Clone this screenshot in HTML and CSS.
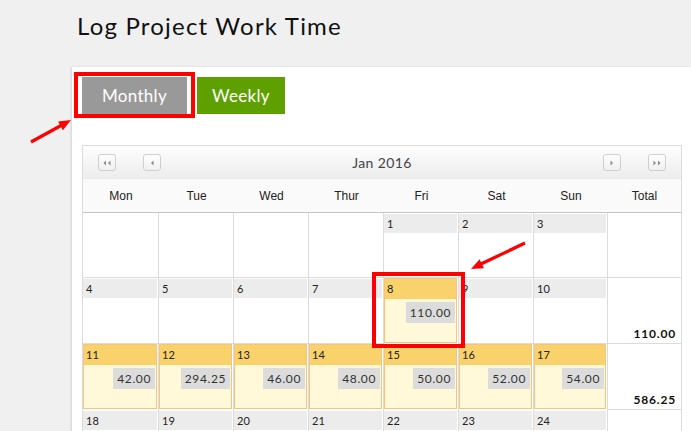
FILE: index.html
```html
<!DOCTYPE html>
<html>
<head>
<meta charset="utf-8">
<title>Log Project Work Time</title>
<link rel="stylesheet" href="styles.css">
</head>
<body>
<h1 class="title">Log Project Work Time</h1>
<div class="panel">
  <div class="tabs">
    <button class="tab tab-monthly">Monthly</button>
    <button class="tab tab-weekly">Weekly</button>
  </div>
  <div class="calendar">
    <div class="cal-head">
      <div class="nav-group">
        <span class="nav-btn"><svg width="8" height="6" viewBox="0 0 8 6"><path d="M3 0.5V5.5L0.5 3Z M7.5 0.5V5.5L5 3Z" fill="#8a8a8a"/></svg></span>
        <span class="nav-btn"><svg width="4" height="6" viewBox="0 0 4 6"><path d="M3.5 0.5V5.5L1 3Z" fill="#8a8a8a"/></svg></span>
      </div>
      <div class="month">Jan 2016</div>
      <div class="nav-group">
        <span class="nav-btn"><svg width="4" height="6" viewBox="0 0 4 6"><path d="M0.5 0.5V5.5L3 3Z" fill="#8a8a8a"/></svg></span>
        <span class="nav-btn"><svg width="8" height="6" viewBox="0 0 8 6"><path d="M0.5 0.5V5.5L3 3Z M5 0.5V5.5L7.5 3Z" fill="#8a8a8a"/></svg></span>
      </div>
    </div>
    <div class="grid">
      <div class="dow">Mon</div>
      <div class="dow">Tue</div>
      <div class="dow">Wed</div>
      <div class="dow">Thur</div>
      <div class="dow">Fri</div>
      <div class="dow">Sat</div>
      <div class="dow">Sun</div>
      <div class="dow">Total</div>

      <div class="cell"></div>
      <div class="cell"></div>
      <div class="cell"></div>
      <div class="cell"></div>
      <div class="cell"><div class="day">1</div></div>
      <div class="cell"><div class="day">2</div></div>
      <div class="cell"><div class="day">3</div></div>
      <div class="cell total"></div>

      <div class="cell"><div class="day">4</div></div>
      <div class="cell"><div class="day">5</div></div>
      <div class="cell"><div class="day">6</div></div>
      <div class="cell"><div class="day">7</div></div>
      <div class="cell event"><div class="box"><div class="day">8</div><div class="val-row"><span class="val">110.00</span></div></div></div>
      <div class="cell"><div class="day">9</div></div>
      <div class="cell"><div class="day">10</div></div>
      <div class="cell total"><span class="sum">110.00</span></div>

      <div class="cell event"><div class="box"><div class="day">11</div><div class="val-row"><span class="val">42.00</span></div></div></div>
      <div class="cell event"><div class="box"><div class="day">12</div><div class="val-row"><span class="val">294.25</span></div></div></div>
      <div class="cell event"><div class="box"><div class="day">13</div><div class="val-row"><span class="val">46.00</span></div></div></div>
      <div class="cell event"><div class="box"><div class="day">14</div><div class="val-row"><span class="val">48.00</span></div></div></div>
      <div class="cell event"><div class="box"><div class="day">15</div><div class="val-row"><span class="val">50.00</span></div></div></div>
      <div class="cell event"><div class="box"><div class="day">16</div><div class="val-row"><span class="val">52.00</span></div></div></div>
      <div class="cell event"><div class="box"><div class="day">17</div><div class="val-row"><span class="val">54.00</span></div></div></div>
      <div class="cell total"><span class="sum">586.25</span></div>

      <div class="cell"><div class="day">18</div></div>
      <div class="cell"><div class="day">19</div></div>
      <div class="cell"><div class="day">20</div></div>
      <div class="cell"><div class="day">21</div></div>
      <div class="cell"><div class="day">22</div></div>
      <div class="cell"><div class="day">23</div></div>
      <div class="cell"><div class="day">24</div></div>
      <div class="cell total"></div>
    </div>
  </div>
</div>

<div class="mark mark-tab"></div>
<div class="mark mark-day"></div>
<svg class="arrows" width="691" height="431" viewBox="0 0 691 431">
  <line x1="31" y1="142" x2="62" y2="125" stroke="#f00" stroke-width="3.2"/>
  <polygon points="71,120 58.1,121.4 62.9,130.2" fill="#f00"/>
  <line x1="525" y1="243" x2="481" y2="264" stroke="#f00" stroke-width="3.2"/>
  <polygon points="471,269 479.6,259.3 484,268.3" fill="#f00"/>
</svg>
</body>
</html>
```
FILE: styles.css
```css
html, body {
  margin: 0;
  padding: 0;
  overflow: hidden;
  height: 100%;
}
body {
  background: #f0f0f0;
  font-family: Lato, "Open Sans", sans-serif;
  color: #222;
  position: relative;
}
.title {
  margin: 11px 0 0 77px;
  font-weight: 400;
  font-size: 24px;
  line-height: 29px;
  letter-spacing: 1.2px;
  color: #111;
}
.panel {
  margin: 27px 0 0 72px;
  background: #fff;
  box-shadow: -1px 0 2px rgba(0,0,0,0.12);
  padding: 10px 10px 40px 10px;
  min-height: 400px;
}
.tabs {
  display: flex;
  gap: 10px;
}
.tab {
  border: 0;
  height: 37px;
  font-family: Lato, sans-serif;
  font-size: 17px;
  letter-spacing: 0.3px;
  color: #fff;
  padding: 0;
}
.tab-monthly { width: 105px; background: #999; }
.tab-weekly { width: 88px; background: #5da000; }

.calendar {
  margin-top: 31px;
  width: 600px;
  border: 1px solid #dcdcdc;
  box-sizing: border-box;
}
.cal-head {
  height: 33px;
  background: linear-gradient(#fefefe, #ececec);
  display: flex;
  align-items: center;
  justify-content: space-between;
  padding: 0 15px;
}
.nav-group {
  display: flex;
  gap: 27px;
}
.nav-btn {
  width: 18px;
  height: 17px;
  box-sizing: border-box;
  border: 1px solid #cfcfcf;
  border-radius: 3px;
  background: linear-gradient(#fff, #f0f0f0);
  display: flex;
  align-items: center;
  justify-content: center;
}
.month {
  font-size: 14px;
  color: #444;
  letter-spacing: 0.4px;
}
.grid {
  display: grid;
  grid-template-columns: 76px 75px 75px 75px 75px 75px 74px 1fr;
  grid-template-rows: 34px 65px 66px 66px 66px;
}
.dow {
  box-sizing: border-box;
  background: #fafafa;
  border-bottom: 1px solid #c4c4c4;
  font-family: "Liberation Sans", Arial, sans-serif;
  font-size: 12px;
  color: #222;
  display: flex;
  align-items: center;
  justify-content: center;
}
.cell {
  box-sizing: border-box;
  border-right: 1px solid #dcdcdc;
  border-bottom: 1px solid #dcdcdc;
  padding: 1px 1px 0 0;
}
.cell:nth-child(8n) { border-right: 0; }
.day {
  height: 19px;
  line-height: 19px;
  background: #ececec;
  font-size: 11px;
  padding-left: 3px;
  color: #222;
}
.cell.event {
  padding: 0 1px 0 0;
  border-bottom-color: #fff;
}
.cell.event .box {
  box-sizing: border-box;
  height: 100%;
  background: #fff8d9;
  border: 1px solid #f8c47d;
}
.cell.event .day {
  background: #f9d26c;
  height: 20px;
  line-height: 20px;
  padding-left: 2px;
}
.val-row {
  display: flex;
  justify-content: flex-end;
  padding: 3px 1px 0 0;
}
.val {
  background: #dcdcdc;
  height: 21px;
  line-height: 21px;
  padding: 0 4px;
  font-size: 12px;
  letter-spacing: 0.6px;
  color: #333;
}
.cell.total {
  display: flex;
  align-items: flex-end;
  justify-content: flex-end;
  padding: 0 5px 2px 0;
}
.sum {
  font-weight: 700;
  font-size: 12px;
  letter-spacing: 0.8px;
  color: #111;
}
.mark {
  position: absolute;
  border: 4px solid #f00;
  box-sizing: border-box;
}
.mark-tab { left: 74px; top: 72px; width: 121px; height: 46px; }
.mark-day { left: 372px; top: 272px; width: 93px; height: 76px; }
.arrows {
  position: absolute;
  left: 0;
  top: 0;
}
```
